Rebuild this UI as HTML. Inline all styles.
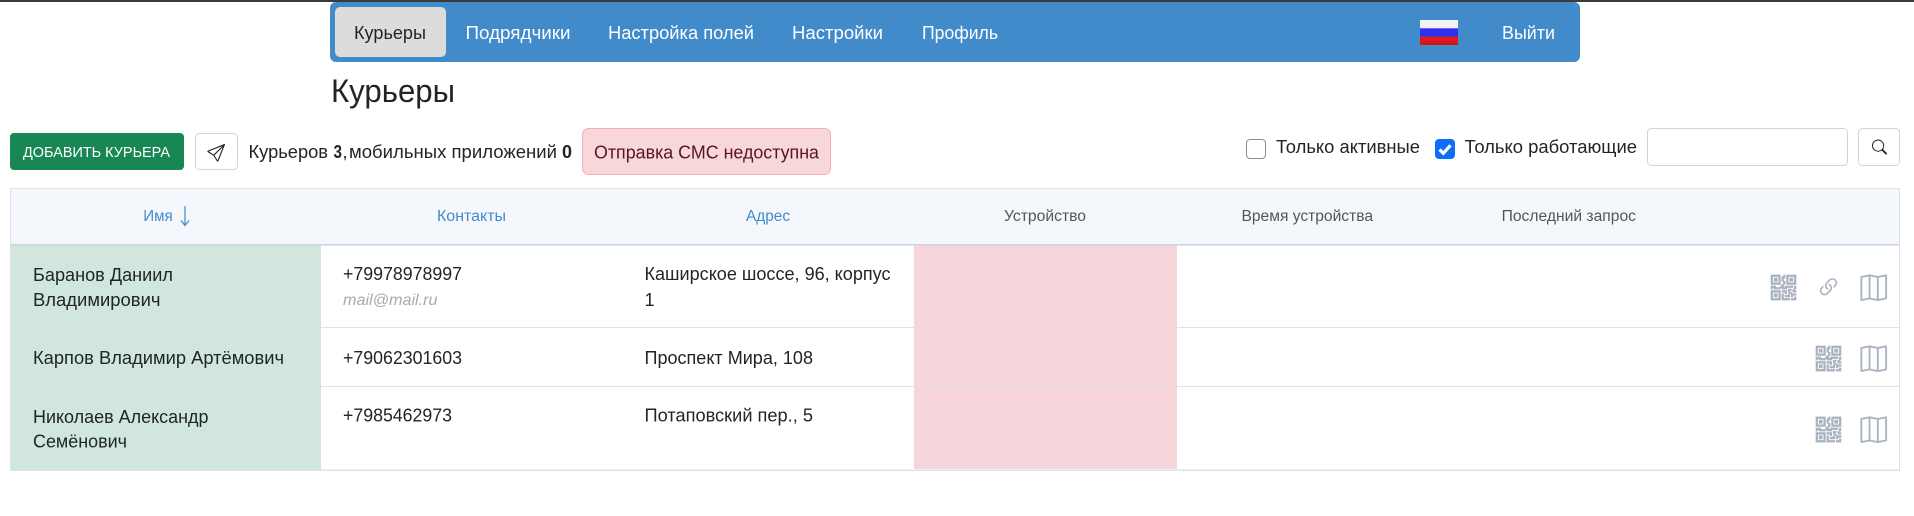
<!DOCTYPE html>
<html lang="ru">
<head>
<meta charset="utf-8">
<title>Курьеры</title>
<style>
html,body{margin:0;padding:0;background:#fff;width:1914px;height:516px;overflow:hidden}
svg{display:block;position:absolute;left:0;top:0}
text{font-family:"Liberation Sans","DejaVu Sans",sans-serif;font-size:18px;fill:#212529}
.n{fill:#fff}
.h{font-size:15.5px;fill:#555}
.l{font-size:15.5px;fill:#428bca}
.i{fill:#a9b2bf}
.q{fill:#a9b2bf;stroke:#a9b2bf;stroke-width:.42}
.m{fill:#a9b2bf;stroke:#a9b2bf;stroke-width:.12}
</style>
</head>
<body>
<svg width="1914" height="516" viewBox="0 0 1914 516" xmlns="http://www.w3.org/2000/svg">
<defs>
<linearGradient id="gl" x1="0" y1="0" x2="0" y2="1">
<stop offset="0" stop-color="#fff" stop-opacity=".0"/>
<stop offset="1" stop-color="#000" stop-opacity=".14"/>
</linearGradient>
<g id="qr"><path d="M2 2h2v2H2V2Z"/><path d="M6 0v6H0V0h6ZM5 1H1v4h4V1ZM4 12H2v2h2v-2Z"/><path d="M6 10v6H0v-6h6Zm-5 1v4h4v-4H1Zm11-9h2v2h-2V2Z"/><path d="M10 0v6h6V0h-6Zm5 1v4h-4V1h4ZM8 1V0h1v2H8v2H7V1h1Zm0 5V4h1v2H8ZM6 8V7h1V6h1v2h1V7h5v1h-4v1H7V8H6Zm0 0v1H2V8H1v1H0V7h3v1h3Zm10 1h-1V7h1v2Zm-1 0h-1v2h2v-1h-1V9Zm-4 0h2v1h-1v1h-1V9Zm2 3v-1h-1v1h-1v1H9v1h3v-2h1Zm0 0h3v1h-2v1h-1v-2Zm-4-1v1h1v-2H7v1h2Z"/><path d="M7 12h1v3h4v1H7v-4Zm9 2v2h-3v-1h2v-1h1Z"/></g>
<g id="mp"><path fill-rule="evenodd" d="M15.817.113A.5.5 0 0 1 16 .5v14a.5.5 0 0 1-.402.49l-5 1a.502.502 0 0 1-.196 0L5.5 15.01l-4.902.98A.5.5 0 0 1 0 15.5v-14a.5.5 0 0 1 .402-.49l5-1a.5.5 0 0 1 .196 0L10.5.99l4.902-.98a.5.5 0 0 1 .415.103zM10 1.91l-4-.8v12.98l4 .8V1.91zm1 12.98 4-.8V1.11l-4 .8v12.98zm-6-.8V1.11l-4 .8v12.98l4-.8z"/></g>
</defs>

<!-- top line -->
<rect x="0" y="0" width="1914" height="2" fill="#3a3a3a"/>

<!-- navbar -->
<rect x="330" y="2" width="1250" height="60" rx="6" fill="#428bca"/>
<rect x="335" y="7" width="111" height="50" rx="5" fill="#dcdcdc"/>
<text x="354" y="39" textLength="72" lengthAdjust="spacingAndGlyphs">Курьеры</text>
<text class="n" x="465.5" y="39" textLength="105" lengthAdjust="spacingAndGlyphs">Подрядчики</text>
<text class="n" x="608" y="39" textLength="146" lengthAdjust="spacingAndGlyphs">Настройка полей</text>
<text class="n" x="792" y="39" textLength="91" lengthAdjust="spacingAndGlyphs">Настройки</text>
<text class="n" x="922" y="39" textLength="76" lengthAdjust="spacingAndGlyphs">Профиль</text>
<rect x="1420" y="20" width="38" height="8.5" fill="#f4f4f4"/>
<rect x="1420" y="28.3" width="38" height="8.4" fill="#2a2af5"/>
<rect x="1420" y="36.7" width="38" height="8.3" fill="#f51414"/>
<rect x="1420" y="20" width="38" height="25" fill="url(#gl)"/>
<text class="n" x="1502" y="39" textLength="53" lengthAdjust="spacingAndGlyphs">Выйти</text>

<!-- heading -->
<text x="331" y="102" style="font-size:32px" textLength="124" lengthAdjust="spacingAndGlyphs">Курьеры</text>

<!-- toolbar left -->
<rect x="10" y="133" width="174" height="37" rx="4" fill="#198754"/>
<text class="n" x="23" y="157" style="font-size:15px" textLength="147" lengthAdjust="spacingAndGlyphs">ДОБАВИТЬ КУРЬЕРА</text>
<rect x="195.5" y="133.5" width="42" height="36" rx="4" fill="#fff" stroke="#ced4da"/>
<svg x="207" y="144" width="18" height="18" viewBox="0 0 16 16"><path fill="#212529" d="M15.854.146a.5.5 0 0 1 .11.54l-5.819 14.547a.75.75 0 0 1-1.329.124l-3.178-4.995L.643 7.184a.75.75 0 0 1 .124-1.33L15.314.037a.5.5 0 0 1 .54.11ZM6.636 10.07l2.761 4.338L14.13 2.576 6.636 10.07Zm6.787-8.201L1.591 6.602l4.339 2.76 7.494-7.493Z"/></svg>
<text x="248.5" y="158" textLength="79.5" lengthAdjust="spacingAndGlyphs">Курьеров</text>
<text x="333.5" y="158" style="font-weight:700" textLength="8.5" lengthAdjust="spacingAndGlyphs">3</text>
<text x="342.5" y="158">,</text>
<text x="349" y="158" textLength="208" lengthAdjust="spacingAndGlyphs">мобильных приложений</text>
<text x="562" y="158" style="font-weight:700" textLength="10" lengthAdjust="spacingAndGlyphs">0</text>
<rect x="582.5" y="128.5" width="248" height="46" rx="6" fill="#f8d7da" stroke="#f1aeb5"/>
<text x="594" y="158.5" style="fill:#58151c" textLength="225" lengthAdjust="spacingAndGlyphs">Отправка СМС недоступна</text>

<!-- toolbar right -->
<rect x="1246.5" y="139.5" width="19" height="19" rx="3.5" fill="#fff" stroke="#8a8f96" stroke-width="1"/>
<text x="1276" y="153" textLength="144" lengthAdjust="spacingAndGlyphs">Только активные</text>
<rect x="1435" y="139" width="20" height="20" rx="4" fill="#0d6efd"/>
<path d="M1439.5 149.5l3.8 3.8 7.2-8" fill="none" stroke="#fff" stroke-width="3.2"/>
<text x="1464.5" y="153" textLength="172.5" lengthAdjust="spacingAndGlyphs">Только работающие</text>
<rect x="1647.5" y="128.5" width="200" height="37" rx="4" fill="#fff" stroke="#ced4da"/>
<rect x="1858.5" y="128.5" width="41" height="37" rx="4" fill="#fff" stroke="#ced4da"/>
<svg x="1872" y="139.5" width="15" height="15" viewBox="0 0 16 16"><path fill="#212529" d="M11.742 10.344a6.5 6.5 0 1 0-1.397 1.398h-.001c.03.04.062.078.098.115l3.85 3.85a1 1 0 0 0 1.415-1.414l-3.85-3.85a1.007 1.007 0 0 0-.115-.1zM12 6.5a5.5 5.5 0 1 1-11 0 5.5 5.5 0 0 1 11 0z"/></svg>

<!-- table header -->
<rect x="10" y="188" width="1890" height="57" fill="#f4f7fb"/>
<rect x="10" y="188" width="1890" height="1" fill="#dee2e6"/>
<text class="l" x="143.2" y="221" textLength="29.5" lengthAdjust="spacingAndGlyphs">Имя</text>
<path d="M185 206v19M181 220.5l4 5 4-5" fill="none" stroke="#428bca" stroke-width="1.2"/>
<text class="l" x="437" y="221" textLength="69" lengthAdjust="spacingAndGlyphs">Контакты</text>
<text class="l" x="746" y="221" textLength="44" lengthAdjust="spacingAndGlyphs">Адрес</text>
<text class="h" x="1004" y="221" textLength="82" lengthAdjust="spacingAndGlyphs">Устройство</text>
<text class="h" x="1241.5" y="221" textLength="131.5" lengthAdjust="spacingAndGlyphs">Время устройства</text>
<text class="h" x="1501.6" y="221" textLength="134.4" lengthAdjust="spacingAndGlyphs">Последний запрос</text>

<!-- table body backgrounds -->
<rect x="10" y="245" width="311" height="225" fill="#d1e7dd"/>
<rect x="914" y="245" width="263" height="224" fill="#f6d6da"/>

<!-- table lines -->
<rect x="10" y="244" width="1890" height="1.5" fill="#c8d4de"/>
<rect x="10" y="327" width="1890" height="1" fill="#dee2e6"/>
<rect x="10" y="386" width="1890" height="1" fill="#dee2e6"/>
<rect x="10" y="469.5" width="1890" height="1.5" fill="#dee2e6"/>
<rect x="10" y="188" width="1" height="283" fill="#dee2e6"/>
<rect x="1899" y="188" width="1" height="283" fill="#dee2e6"/>

<!-- row 1 -->
<text x="33" y="281" textLength="140" lengthAdjust="spacingAndGlyphs">Баранов Даниил</text>
<text x="33" y="306" textLength="127.5" lengthAdjust="spacingAndGlyphs">Владимирович</text>
<text x="343" y="280" textLength="119" lengthAdjust="spacingAndGlyphs">+79978978997</text>
<text x="343" y="305" style="font-size:16px;font-style:italic;fill:#aaa" textLength="94.5" lengthAdjust="spacingAndGlyphs">mail@mail.ru</text>
<text x="644.5" y="280" textLength="246" lengthAdjust="spacingAndGlyphs">Каширское шоссе, 96, корпус</text>
<text x="644.5" y="306">1</text>
<use href="#qr" transform="translate(1771 275) scale(1.5625)" class="q"/>
<svg x="1816" y="275" width="25" height="25" viewBox="0 0 16 16" class="i"><path d="M4.715 6.542 3.343 7.914a3 3 0 1 0 4.243 4.243l1.828-1.829A3 3 0 0 0 8.586 5.5L8 6.086a1.002 1.002 0 0 0-.154.199 2 2 0 0 1 .861 3.337L6.88 11.45a2 2 0 1 1-2.83-2.83l.793-.792a4.018 4.018 0 0 1-.128-1.287z"/><path d="M6.586 4.672A3 3 0 0 0 7.414 9.5l.775-.776a2 2 0 0 1-.896-3.346L9.12 3.55a2 2 0 1 1 2.83 2.83l-.793.792c.112.42.155.855.128 1.287l1.372-1.372a3 3 0 1 0-4.243-4.243L6.586 4.672z"/></svg>
<use href="#mp" transform="translate(1860.5 274.5) scale(1.65)" class="m"/>

<!-- row 2 -->
<text x="33" y="364" textLength="251" lengthAdjust="spacingAndGlyphs">Карпов Владимир Артёмович</text>
<text x="343" y="364" textLength="119" lengthAdjust="spacingAndGlyphs">+79062301603</text>
<text x="644.5" y="364" textLength="168.5" lengthAdjust="spacingAndGlyphs">Проспект Мира, 108</text>
<use href="#qr" transform="translate(1816 346) scale(1.5625)" class="q"/>
<use href="#mp" transform="translate(1860.5 345.5) scale(1.65)" class="m"/>

<!-- row 3 -->
<text x="33" y="423" textLength="175.5" lengthAdjust="spacingAndGlyphs">Николаев Александр</text>
<text x="33" y="447.5" textLength="94" lengthAdjust="spacingAndGlyphs">Семёнович</text>
<text x="343" y="421.5" textLength="109" lengthAdjust="spacingAndGlyphs">+7985462973</text>
<text x="644.5" y="421.5" textLength="168.5" lengthAdjust="spacingAndGlyphs">Потаповский пер., 5</text>
<use href="#qr" transform="translate(1816 417) scale(1.5625)" class="q"/>
<use href="#mp" transform="translate(1860.5 416.5) scale(1.65)" class="m"/>
</svg>
</body>
</html>
